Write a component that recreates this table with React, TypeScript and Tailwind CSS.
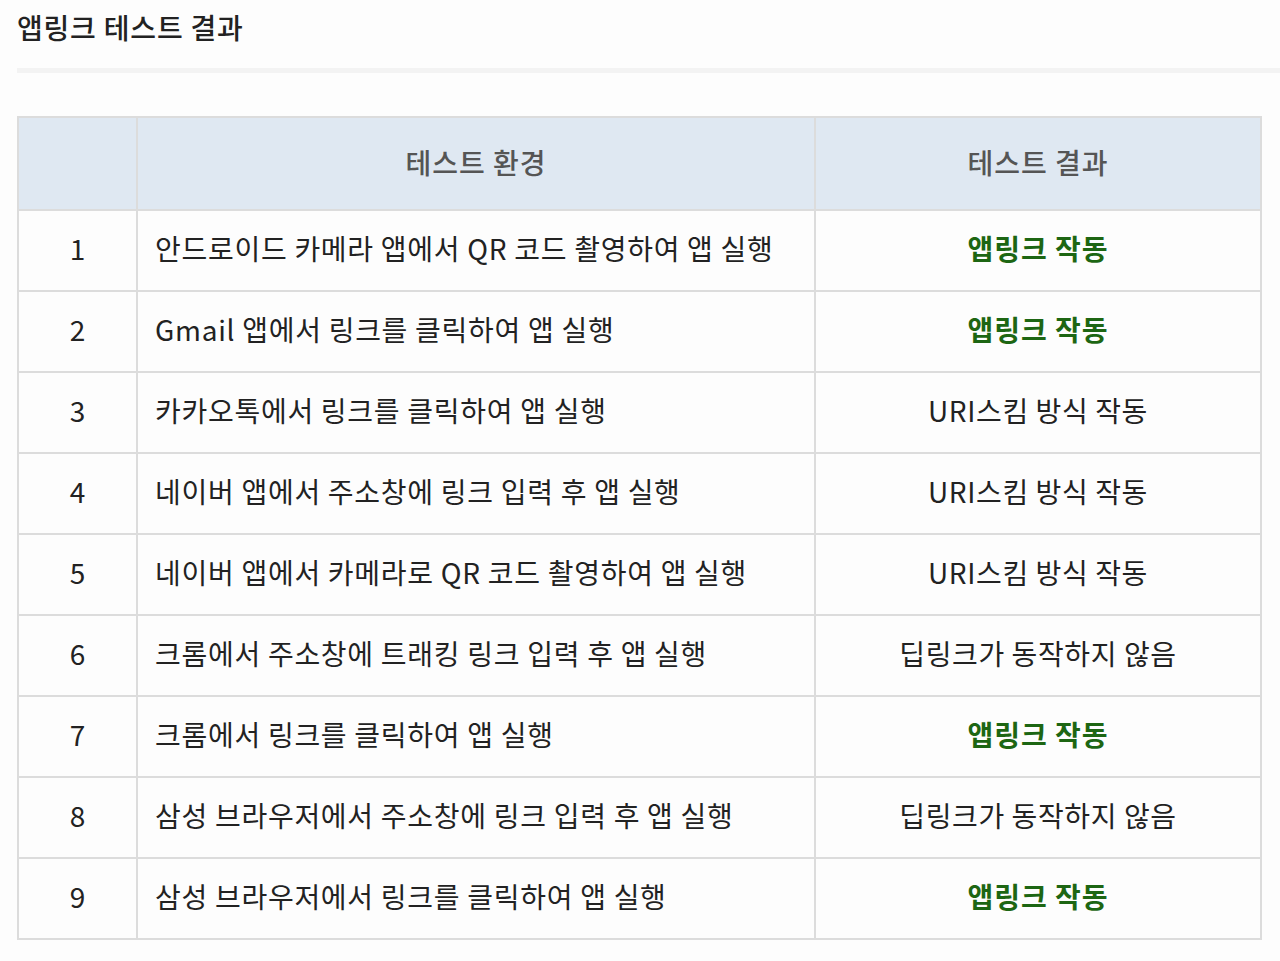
import React from "react";

type Row = { env: string; result: string; ok: boolean };

const rows: Row[] = [
  { env: "안드로이드 카메라 앱에서 QR 코드 촬영하여 앱 실행", result: "앱링크 작동", ok: true },
  { env: "Gmail 앱에서 링크를 클릭하여 앱 실행", result: "앱링크 작동", ok: true },
  { env: "카카오톡에서 링크를 클릭하여 앱 실행", result: "URI스킴 방식 작동", ok: false },
  { env: "네이버 앱에서 주소창에 링크 입력 후 앱 실행", result: "URI스킴 방식 작동", ok: false },
  { env: "네이버 앱에서 카메라로 QR 코드 촬영하여 앱 실행", result: "URI스킴 방식 작동", ok: false },
  { env: "크롬에서 주소창에 트래킹 링크 입력 후 앱 실행", result: "딥링크가 동작하지 않음", ok: false },
  { env: "크롬에서 링크를 클릭하여 앱 실행", result: "앱링크 작동", ok: true },
  { env: "삼성 브라우저에서 주소창에 링크 입력 후 앱 실행", result: "딥링크가 동작하지 않음", ok: false },
  { env: "삼성 브라우저에서 링크를 클릭하여 앱 실행", result: "앱링크 작동", ok: true },
];

export default function App() {
  return (
    <div
      className="min-h-[961px] bg-[#fdfdfd] text-[#222] pl-[17px] pr-5"
      style={{ fontFamily: '"Noto Sans CJK KR", "Noto Sans", sans-serif' }}
    >
      <h2 className="pt-[7px] text-[28px] leading-[40px] font-medium tracking-[0.8px] text-[#222]">
        앱링크 테스트 결과
      </h2>
      {/* divider */}
      <div className="mt-[21px] -mr-5 h-[5px] bg-[#f3f3f3]" />

      <table className="mt-[43px] w-[1243px] border-collapse table-fixed">
        <colgroup>
          <col className="w-[119px]" />
          <col className="w-[678px]" />
          <col className="w-[446px]" />
        </colgroup>
        <thead>
          <tr className="h-[93px] bg-[#dfe8f2]">
            <th className="border-2 border-[#dcdcdc]" />
            <th className="border-2 border-[#dcdcdc] pb-[4px] text-[28px] font-medium text-[#555] tracking-[1px]">
              테스트 환경
            </th>
            <th className="border-2 border-[#dcdcdc] pb-[4px] text-[28px] font-medium text-[#555] tracking-[1px]">
              테스트 결과
            </th>
          </tr>
        </thead>
        <tbody>
          {rows.map((r, i) => (
            <tr key={i} className="h-[81px] bg-[#fdfdfd]">
              <td className="border-2 border-[#dcdcdc] pb-[5px] text-center text-[28px] font-normal">
                {i + 1}
              </td>
              <td className="border-2 border-[#dcdcdc] pb-[5px] pl-[17px] text-[28px] tracking-[0.72px]">
                {r.env}
              </td>
              <td
                className={
                  r.ok
                    ? "border-2 border-[#dcdcdc] pb-[5px] text-center text-[28px] font-bold text-[#1d6613] tracking-[1px]"
                    : "border-2 border-[#dcdcdc] pb-[5px] text-center text-[28px] tracking-[0.6px]"
                }
              >
                {r.result}
              </td>
            </tr>
          ))}
        </tbody>
      </table>
    </div>
  );
}
